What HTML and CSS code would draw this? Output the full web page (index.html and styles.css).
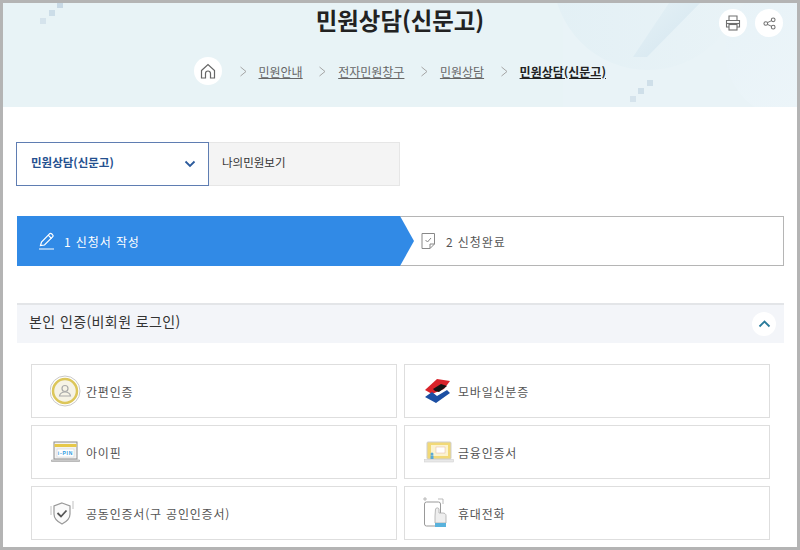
FILE: index.html
```html
<!DOCTYPE html>
<html lang="ko">
<head>
<meta charset="utf-8">
<title>민원상담(신문고)</title>
<link rel="stylesheet" href="styles.css">
</head>
<body>
<div class="frame">
  <header class="hero">
    <svg class="hero-bg" viewBox="0 0 794 104" width="794" height="104" aria-hidden="true">
      <defs>
        <linearGradient id="g1" x1="0" y1="0" x2="1" y2="1"><stop offset="0" stop-color="#e6f2f6"/><stop offset="1" stop-color="#d3e5ef"/></linearGradient>
        <linearGradient id="g2" x1="0" y1="0" x2="1" y2="0"><stop offset="0" stop-color="#e3f0f5"/><stop offset="1" stop-color="#e9f3f7"/></linearGradient>
        <linearGradient id="g3" x1="0" y1="0" x2="1" y2="1"><stop offset="0" stop-color="#e7f2f7"/><stop offset="1" stop-color="#eef6fa"/></linearGradient>
      </defs>
      <rect x="560" width="234" height="104" fill="#e9f3f7"/>
      <circle cx="645" cy="-28" r="95" fill="url(#g2)"/>
      <path d="M700 -3H668L630 54 644 54Z" fill="url(#g1)"/>
      <circle cx="790" cy="48" r="68" fill="url(#g3)"/>
      <rect x="54" y="0" width="6" height="5" fill="#c8d9e5"/><rect x="46" y="7" width="6" height="6" fill="#ccdde8"/><rect x="37" y="15" width="6" height="6" fill="#d5e3ec"/>
      <rect x="644" y="77" width="6" height="6" fill="#cfdfe9"/><rect x="635" y="85" width="6" height="6" fill="#cfdfe9"/><rect x="627" y="93" width="6" height="6" fill="#d5e3ec"/>
    </svg>
    <h1 class="title">민원상담(신문고)</h1>
    <div class="tools">
      <span class="round"><svg width="18" height="18" viewBox="0 0 18 18" fill="none" stroke="#707070" stroke-width="1.1"><path d="M5 6V2h8v4M5 13H2.500V6.500h13V13H13"/><rect x="5" y="10.500" width="8" height="5.500"/><path d="M2.500 9.500h13"/></svg></span>
      <span class="round"><svg width="13" height="13" viewBox="0 0 14 14" fill="none" stroke="#707070" stroke-width="1.100"><circle cx="3" cy="7" r="2"/><circle cx="11" cy="3" r="2"/><circle cx="11" cy="11" r="2"/><path d="M4.800 6.100 9.200 3.900M4.800 7.900l4.400 2.200"/></svg></span>
    </div>
    <nav class="crumbs">
      <span class="round home"><svg width="16" height="16" viewBox="0 0 16 16" fill="none" stroke="#666" stroke-width="1.2"><path d="M1.500 7.500 8 1.500l6.500 6V15h-4v-4.500a2.500 2.500 0 0 0-5 0V15h-4z"/></svg></span>
      <svg class="sep" width="9" height="11" viewBox="0 0 9 11" fill="none" stroke="#a5a5a5"><path d="M1.500 1 7 5.500 1.500 10"/></svg>
      <a class="crumb">민원안내</a>
      <svg class="sep" width="9" height="11" viewBox="0 0 9 11" fill="none" stroke="#a5a5a5"><path d="M1.500 1 7 5.500 1.500 10"/></svg>
      <a class="crumb">전자민원창구</a>
      <svg class="sep" width="9" height="11" viewBox="0 0 9 11" fill="none" stroke="#a5a5a5"><path d="M1.500 1 7 5.500 1.500 10"/></svg>
      <a class="crumb">민원상담</a>
      <svg class="sep" width="9" height="11" viewBox="0 0 9 11" fill="none" stroke="#a5a5a5"><path d="M1.500 1 7 5.500 1.500 10"/></svg>
      <a class="crumb current">민원상담(신문고)</a>
    </nav>
  </header>

  <main class="content">
    <div class="tabs">
      <div class="tab active"><span class="tab-label">민원상담(신문고)</span>
        <svg width="12" height="8" viewBox="0 0 12 8" fill="none" stroke="#2b5a9c" stroke-width="1.800"><path d="M1.500 1.500 6 6l4.500-4.500"/></svg>
      </div>
      <div class="tab plain"><span class="tab-label">나의민원보기</span></div>
    </div>

    <div class="steps">
      <div class="step on">
        <svg width="18" height="18" viewBox="0 0 18 18" fill="none" stroke="#fff" stroke-width="1.2"><path d="M2.500 13.500 3.500 10 11.500 1.800a1.500 1.500 0 0 1 2.100 0l1 1a1.500 1.500 0 0 1 0 2.100L6.500 13z"/><path d="M10.200 3.200l3.300 3.300M1 17h15"/></svg>
        <span>1 신청서 작성</span>
      </div>
      <div class="step off">
        <svg width="15" height="18" viewBox="0 0 15 18" fill="none" stroke="#888" stroke-width="1"><path d="M1 1.500h12.500V12L9 16.500H1z"/><path d="M9 16.500V12h4.500M4.500 8l2 2 3.500-4"/></svg>
        <span>2 신청완료</span>
      </div>
    </div>

    <div class="acc">
      <span class="acc-label">본인 인증(비회원 로그인)</span>
      <span class="round up"><svg width="13" height="8" viewBox="0 0 13 8" fill="none" stroke="#2a7b9b" stroke-width="1.800"><path d="M1.500 6.500 6.500 1.500l5 5"/></svg></span>
    </div>

    <div class="methods">
      <div class="method">
        <svg class="ico" width="32" height="32" viewBox="0 0 32 32"><circle cx="15" cy="16" r="15" fill="#fff" stroke="#c9c9c9"/><circle cx="15" cy="16" r="12" fill="#f6f3e6" stroke="#dcc65a" stroke-width="2.500"/><circle cx="15" cy="13.500" r="3" fill="none" stroke="#aaa" stroke-width="1.200"/><path d="M9.500 21c.5-3 2.500-4 5.500-4s5 1 5.500 4z" fill="none" stroke="#aaa" stroke-width="1.200"/></svg>
        <span>간편인증</span>
      </div>
      <div class="method">
        <svg class="ico" width="30" height="26" viewBox="0 0 30 26"><path d="M1 12 13 1 26 3 20 11 8 16z" fill="#d8232a"/><path d="M9 11 17 6 23 8 15 14 11 13z" fill="#151515"/><path d="M1 19 8 14 13 18 23 12 26 15 12 25z" fill="#1c4fa3"/></svg>
        <span>모바일신분증</span>
      </div>
      <div class="method">
        <svg class="ico" width="30" height="22" viewBox="0 0 30 22"><rect x="3" y="1" width="23" height="17" fill="#f3f3f3" stroke="#8c8c8c"/><rect x="3.500" y="3" width="22" height="3" fill="#e6c84a"/><rect x="6" y="8" width="17" height="8" fill="#fff" stroke="#ccc" stroke-width=".5"/><text x="14.500" y="13.500" font-size="5" font-weight="700" text-anchor="middle" fill="#2f9be0" font-family="Liberation Sans">i-PIN</text><path d="M0.500 19h28v1.500h-28z" fill="#ddd" stroke="#999" stroke-width=".6"/></svg>
        <span>아이핀</span>
      </div>
      <div class="method">
        <svg class="ico" width="30" height="22" viewBox="0 0 30 22"><rect x="3" y="1" width="24" height="17" rx="1" fill="#f2d977" stroke="#cfcfcf"/><rect x="7" y="4" width="17" height="11" fill="#fbf3d0"/><rect x="12" y="6" width="9" height="6" fill="#fff" stroke="#e4b9a0" stroke-width=".5"/><circle cx="8" cy="13" r="1.500" fill="#5aa9d6"/><rect x="6.500" y="14.500" width="3" height="3.500" fill="#5aa9d6"/><rect x="0.500" y="18.500" width="29" height="2.500" fill="#e8e8e8" stroke="#ccc" stroke-width=".5"/></svg>
        <span>금융인증서</span>
      </div>
      <div class="method">
        <svg class="ico narrow" width="24" height="26" viewBox="0 0 24 26" fill="none" stroke="#999" stroke-width="1.200"><path d="M12 3 20 6v8c0 5-4 8-8 10-4-2-8-5-8-10V6z" fill="#fafafa"/><path d="M7.500 13l3.500 3.500 5.500-6" stroke="#555" stroke-width="1.800"/><path d="M1 6v9M23 1v8" stroke="#ccc"/></svg>
        <span>공동인증서(구 공인인증서)</span>
      </div>
      <div class="method">
        <svg class="ico narrow" width="24" height="32" viewBox="0 0 24 32" fill="none" stroke="#999"><rect x="1.500" y="5" width="16" height="24" rx="2"/><path d="M0 2h4M2 0v4M15 2h5M20 2v5" stroke="#aaa" stroke-width=".8"/><path d="M12 26v-7l.5-7c.5-1.500 3-1.500 3.500 0v4h4c1.500 0 3 1 3 2.500V26z" fill="#eee" stroke="#aaa" stroke-width=".8"/><rect x="12" y="26" width="11" height="4" fill="#59b2dc" stroke="none"/></svg>
        <span>휴대전화</span>
      </div>
    </div>
  </main>
</div>
</body>
</html>
```
FILE: styles.css
```css
* { box-sizing: border-box; }
html, body { margin: 0; padding: 0; }
body {
  width: 800px;
  height: 550px;
  overflow: hidden;
  background: #fff;
  font-family: "Noto Sans CJK KR", "Noto Sans", sans-serif;
}
.frame {
  width: 800px;
  height: 550px;
  border: 3px solid #b4b4b4;
  overflow: hidden;
  background: #fff;
}
.hero {
  position: relative;
  height: 104px;
  background: #e8f3f6;
  overflow: hidden;
}
.hero-bg { position: absolute; left: 0; top: 0; }
.title {
  position: relative;
  margin: 0;
  text-align: center;
  font-size: 23.4px;
  line-height: 34px;
  font-weight: 700;
  color: #222;
}
.round {
  display: flex;
  align-items: center;
  justify-content: center;
  width: 28px;
  height: 28px;
  border-radius: 50%;
  background: #fff;
  flex: none;
}
.tools {
  position: absolute;
  right: 14px;
  top: 6px;
  display: flex;
  gap: 8px;
}
.crumbs {
  position: relative;
  display: flex;
  align-items: center;
  margin: 20px 0 0 191px;
  height: 28px;
  font-size: 12px;
  color: #666;
}
.crumb { text-decoration: underline; white-space: nowrap; }
.home { margin-right: 1px; }
.sep { margin: 0 11px 0 15.5px; flex: none; }
.current { font-weight: 700; color: #222; }
.content { padding: 35px 13px 0 13px; }
.tabs { display: flex; height: 44px; }
.tab {
  display: flex;
  align-items: center;
  font-size: 11.5px;
}
.tab-label { margin-bottom: 4px; }
.active {
  width: 193px;
  justify-content: space-between;
  padding: 0 12px 0 14px;
  border: 1.5px solid #5f7db2;
  color: #24508f;
  font-weight: 700;
  background: #fff;
}
.plain {
  width: 191px;
  padding-left: 13px;
  background: #f4f4f4;
  border: 1px solid #e6e6e6;
  border-left: 0;
  color: #333;
}
.steps {
  display: flex;
  height: 50px;
  margin: 30px 0 0 1px;
  width: 767px;
  border: 1px solid #b5b5b5;
  background: #fff;
  font-size: 12px;
  letter-spacing: .9px;
}
.step { display: flex; align-items: center; }
.on {
  width: 397px;
  margin: -1px 0 -1px -1px;
  padding-left: 21px;
  gap: 8px;
  color: #fff;
  background: #318ae6;
  clip-path: polygon(0 0, 383px 0, 397px 50%, 383px 100%, 0 100%);
}
.off {
  padding-left: 7px;
  gap: 10px;
  color: #555;
}
.acc {
  display: flex;
  align-items: center;
  justify-content: space-between;
  width: 767px;
  height: 40px;
  margin: 37px 0 0 1px;
  padding: 0 8px 0 12px;
  background: #f3f5f9;
  border-top: 2px solid #e3e5e8;
  font-size: 14px;
  letter-spacing: .4px;
  color: #333;
}
.acc-label { margin-bottom: 7px; }
.up { width: 24px; height: 24px; }
.methods {
  display: grid;
  grid-template-columns: 366px 366px;
  grid-auto-rows: 54px;
  gap: 7px;
  margin: 21px 0 0 15px;
}
.method {
  display: flex;
  align-items: center;
  gap: 4px;
  padding-left: 18px;
  border: 1px solid #dedede;
  font-size: 12px;
  letter-spacing: .8px;
  color: #555;
}
.method:nth-child(even) { gap: 3px; }
.ico { flex: none; width: 32px; }
.narrow { width: 24px; margin-right: 8px; }
```
